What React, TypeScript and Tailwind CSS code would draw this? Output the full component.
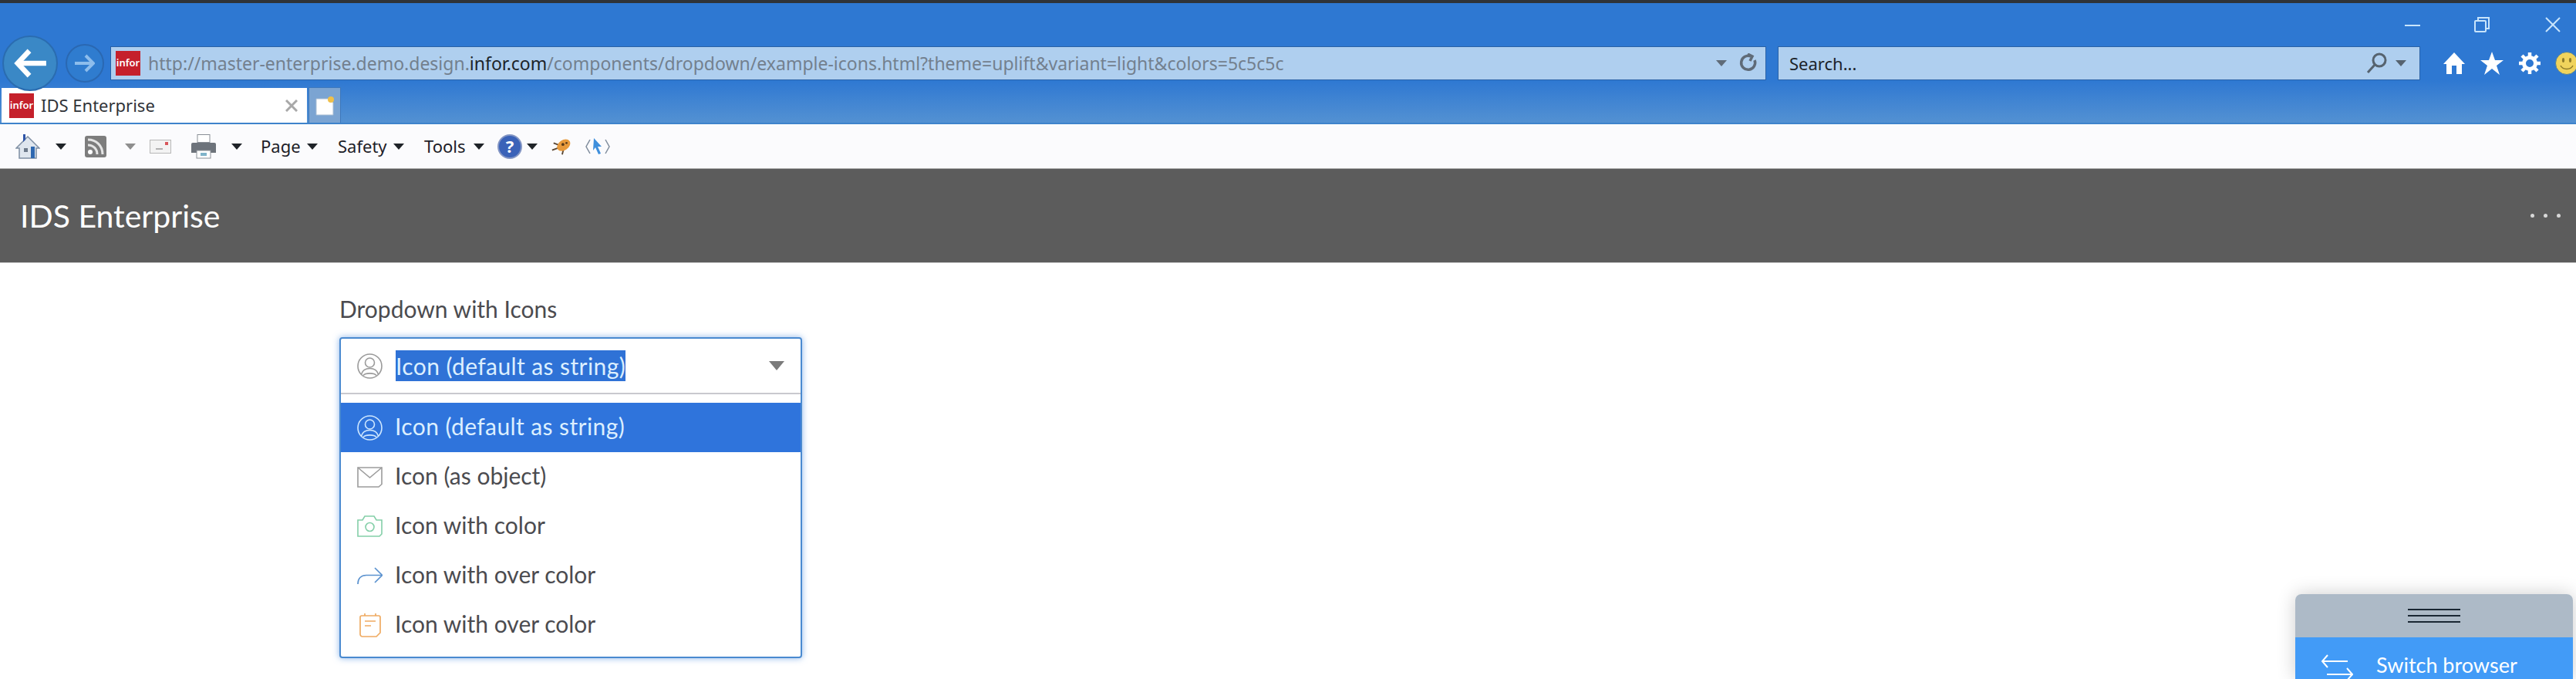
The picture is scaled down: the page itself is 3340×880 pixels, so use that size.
import type { ReactNode } from "react";

function Caret({ color = "#1f2328", className = "" }: { color?: string; className?: string }) {
  return (
    <svg viewBox="0 0 14 8" className={`h-[8px] w-[14px] shrink-0 ${className}`}>
      <polygon points="0,0 14,0 7,8" fill={color} />
    </svg>
  );
}

function InforLogo() {
  return (
    <div className="flex h-[32px] w-[32px] shrink-0 items-center justify-center overflow-hidden bg-[#c5202b] font-['Noto_Sans',sans-serif] text-[13px] font-semibold text-white">
      infor
    </div>
  );
}

function UserIcon({ color }: { color: string }) {
  return (
    <svg viewBox="0 0 33 33" className="h-[33px] w-[33px] shrink-0" fill="none" stroke={color} strokeWidth="1.6">
      <circle cx="16.5" cy="16.5" r="15.5" />
      <circle cx="16.5" cy="12" r="6" />
      <path d="M5.5 27c1.5-5 6-7.5 11-7.5s9.500 2.500 11 7.500" />
      <path d="M8 28.500c3-3.500 14-3.500 17 0" />
    </svg>
  );
}

function MailIcon() {
  return (
    <svg viewBox="0 0 33 27" className="h-[27px] w-[33px] shrink-0" fill="none" stroke="#9c9c9c" strokeWidth="1.6">
      <path d="M1 1h31v21.500l-4 3.500H1z" />
      <path d="M1 1l15.500 13L32 1" />
    </svg>
  );
}

function CameraIcon() {
  return (
    <svg viewBox="0 0 33 28" className="h-[28px] w-[33px] shrink-0" fill="none" stroke="#84cfa8" strokeWidth="1.6">
      <path d="M1 6h6l3-5h12l3 5h7v18l-3 3H1z" />
      <circle cx="16.500" cy="15" r="5.500" />
    </svg>
  );
}

function RedoIcon() {
  return (
    <svg viewBox="0 0 33 24" className="h-[24px] w-[33px] shrink-0" fill="none" stroke="#5b92cf" strokeWidth="1.7">
      <path d="M1 23c0-7 4-11.500 11-11.500h20" />
      <path d="M23 2l9.500 9.500L23 21" />
    </svg>
  );
}

function NoteIcon() {
  return (
    <svg viewBox="0 0 28 32" className="h-[32px] w-[28px] shrink-0" fill="none" stroke="#efab62" strokeWidth="1.7">
      <path d="M3 4h22a2 2 0 0 1 2 2v20l-5 5H4a3 3 0 0 1-3-3V6a2 2 0 0 1 2-2z" />
      <path d="M7 1v3M21 1v3M7 11h14M7 17h8" />
    </svg>
  );
}

function OptionRow({ icon, label, active }: { icon: ReactNode; label: string; active?: boolean }) {
  return (
    <div
      className={`flex h-[64px] items-center pl-[21px] ${active ? "bg-[#2f74dc] text-[#dcefff]" : "text-[#4b4b4f]"}`}
    >
      <div className="flex w-[33px] shrink-0 justify-center">{icon}</div>
      <span className={`ml-[16px] pb-[3px] ${active ? "tracking-[0.4px]" : ""}`}>{label}</span>
    </div>
  );
}

export default function App() {
  return (
    <div className="relative h-[880px] w-[3340px] overflow-hidden bg-white font-['Noto_Sans',sans-serif]">
      <div className="h-[4px] bg-[#2f3338]" />

      {/* window controls */}
      <div className="flex h-[56px] items-start justify-end bg-[#2e78d2] pr-[20px] pt-[18px]">
        <svg viewBox="0 0 20 20" className="mr-[70px] h-[20px] w-[20px]" fill="none" stroke="#c8e4fb" strokeWidth="2">
          <path d="M0 11h20" />
        </svg>
        <svg viewBox="0 0 20 20" className="mr-[72px] h-[20px] w-[20px]" fill="none" stroke="#c8e4fb" strokeWidth="2">
          <rect x="1" y="5" width="14" height="14" rx="1" />
          <path d="M5 5V1h14v14h-4" />
        </svg>
        <svg viewBox="0 0 20 20" className="h-[20px] w-[20px]" fill="none" stroke="#c8e4fb" strokeWidth="2">
          <path d="M1 1l18 18M19 1L1 19" />
        </svg>
      </div>

      {/* navigation row */}
      <div className="relative z-10 flex h-[44px] items-center bg-[#2e78d2] pl-[3px]">
        <div className="-my-[14px] flex h-[72px] w-[72px] shrink-0 items-center justify-center rounded-full border-2 border-[#2a6cb0] bg-[#3a88c6]">
          <svg viewBox="0 0 44 40" className="h-[38px] w-[42px]" fill="none" stroke="#ffffff" strokeWidth="7">
            <path d="M21 3L5 20l16 17" />
            <path d="M6 20h38" />
          </svg>
        </div>
        <div className="ml-[10px] flex h-[50px] w-[50px] shrink-0 items-center justify-center rounded-full border-2 border-[#2a68b2] bg-[#2f7ccf]">
          <svg viewBox="0 0 26 24" className="h-[24px] w-[26px]" fill="none" stroke="#8dbdec" strokeWidth="4">
            <path d="M14 2l10 10-10 10" />
            <path d="M0 12h23" />
          </svg>
        </div>
        <div className="ml-[8px] flex h-[44px] w-[2147px] shrink-0 items-center border border-[#2a62a6] bg-[#afcfef] pl-[6px]">
          <InforLogo />
          <div className="ml-[10px] whitespace-nowrap text-[23px] text-[#73808e]">
            http://master-enterprise.demo.design.<span className="text-[#1c2329]">infor.com</span>
            /components/dropdown/example-icons.html?theme=uplift&amp;variant=light&amp;colors=5c5c5c
          </div>
          <Caret color="#5f6b78" className="ml-auto" />
          <svg viewBox="0 0 24 26" className="ml-[16px] mr-[10px] h-[26px] w-[24px]" fill="none" stroke="#5f6b78" strokeWidth="3.500">
            <path d="M20 9a9 9 0 1 1-5-5" />
            <path d="M11 1l6 3-3 6" />
          </svg>
        </div>
        <div className="ml-[15px] flex h-[44px] w-[833px] shrink-0 items-center border border-[#2a62a6] bg-[#afcfef] pl-[14px] text-[22px] text-[#1c2329]">
          Search...
          <svg viewBox="0 0 27 28" className="ml-auto h-[28px] w-[27px]" fill="none" stroke="#56636f" strokeWidth="3">
            <circle cx="17" cy="10" r="8" />
            <path d="M11 16L2 26" />
          </svg>
          <Caret color="#56636f" className="ml-[11px] mr-[17px]" />
        </div>
        <div className="ml-[30px] flex shrink-0 items-center">
          <svg viewBox="0 0 28 28" className="h-[28px] w-[28px]" fill="#ffffff">
            <path d="M14 0L28 15h-4v13h-7V17h-6v11H4V15H0z" />
          </svg>
          <svg viewBox="0 0 30 30" className="ml-[20px] h-[30px] w-[30px]" fill="#ffffff">
            <polygon points="15,0 19,11 30,11 21,18 25,30 15,22 5,30 9,18 0,11 11,11" />
          </svg>
          <svg viewBox="0 0 28 28" className="ml-[20px] h-[28px] w-[28px]" fill="none" stroke="#ffffff">
            <circle cx="14" cy="14" r="7.500" strokeWidth="5" />
            <path
              d="M14 0v6M14 22v6M0 14h6M22 14h6M4 4l4 4M20 20l4 4M24 4l-4 4M8 20l-4 4"
              strokeWidth="4.500"
            />
          </svg>
          <svg viewBox="0 0 30 30" className="ml-[19px] h-[30px] w-[30px] shrink-0">
            <circle cx="15" cy="15" r="14.500" fill="#f0d35c" stroke="#4f7f99" strokeWidth="1" />
            <ellipse cx="10.500" cy="11" rx="1.600" ry="3" fill="#8f7c2a" />
            <ellipse cx="19.500" cy="11" rx="1.600" ry="3" fill="#8f7c2a" />
            <path d="M7 18c3 6 13 6 16 0" fill="none" stroke="#8f7c2a" strokeWidth="1.500" />
          </svg>
        </div>
      </div>

      {/* tab row */}
      <div className="flex h-[55px] items-end bg-gradient-to-b from-[#2e78d2] to-[#5391d2] pl-[2px]">
        <div className="flex h-[45px] w-[396px] items-center bg-white pl-[10px] pr-[12px] text-[22px] text-[#303338]">
          <InforLogo />
          <span className="ml-[9px]">IDS Enterprise</span>
          <svg viewBox="0 0 16 16" className="ml-auto h-[16px] w-[16px]" fill="none" stroke="#a8a8a8" strokeWidth="3">
            <path d="M1 1l14 14M15 1L1 15" />
          </svg>
        </div>
        <div className="ml-[2px] flex h-[46px] w-[42px] items-center justify-center border border-b-0 border-[#3d78bc] bg-[#7ba4d2]">
          <svg viewBox="0 0 24 26" className="h-[26px] w-[24px]">
            <path d="M1 4h17l5 5v16H1z" fill="#ffffff" stroke="#a9bdd2" />
            <circle cx="20" cy="5" r="4" fill="#f0c04a" />
          </svg>
        </div>
      </div>
      <div className="h-[2px] bg-[#3e83cb]" />

      {/* command bar */}
      <div className="flex h-[57px] items-center bg-[#fbfbfd] pl-[20px] text-[22px] text-[#1d2027]">
        <svg viewBox="0 0 32 32" className="h-[32px] w-[32px] shrink-0">
          <path d="M16 3L1 18h4v13h22V18h4z" fill="#dfe6ee" stroke="#7f8fa3" strokeWidth="1.500" />
          <path d="M10 0h3v7l-3 3z" fill="#2f55a8" />
          <rect x="11" y="18" width="5" height="5" fill="#6d7a8a" />
          <rect x="20" y="16" width="5" height="15" fill="#2f68b0" />
        </svg>
        <Caret className="ml-[20px]" />
        <svg viewBox="0 0 28 28" className="ml-[24px] h-[28px] w-[28px] shrink-0">
          <rect x="0" y="0" width="28" height="28" rx="3" fill="#7d7d7d" />
          <circle cx="7" cy="21" r="3" fill="#ffffff" />
          <path d="M4 12c7 0 12 5 12 12M4 5c11 0 19 8 19 19" fill="none" stroke="#e4e4e4" strokeWidth="3" />
        </svg>
        <Caret color="#8e8e8e" className="ml-[24px]" />
        <svg viewBox="0 0 28 18" className="ml-[18px] h-[18px] w-[28px] shrink-0">
          <rect x="0.500" y="0.500" width="27" height="17" fill="#f3f3f3" stroke="#b8b8b8" />
          <rect x="20" y="3" width="4" height="4" fill="#d8565a" />
          <path d="M8 12h9" stroke="#9a9a9a" strokeWidth="1.500" />
        </svg>
        <svg viewBox="0 0 32 32" className="ml-[26px] h-[32px] w-[32px] shrink-0">
          <rect x="8" y="0.500" width="16" height="10" fill="#ffffff" stroke="#8a8f96" />
          <path d="M2 11h28a2 2 0 0 1 2 2v11H0V13a2 2 0 0 1 2-2z" fill="#6d737b" />
          <rect x="7" y="21" width="18" height="10" fill="#ffffff" stroke="#8a8f96" />
          <rect x="12" y="24" width="8" height="4" fill="#7fb3c9" />
        </svg>
        <Caret className="ml-[20px]" />
        <span className="ml-[24px] w-[52px] whitespace-nowrap">Page</span>
        <Caret className="ml-[8px]" />
        <span className="ml-[26px] w-[65px] whitespace-nowrap">Safety</span>
        <Caret className="ml-[7px]" />
        <span className="ml-[26px] w-[56px] whitespace-nowrap">Tools</span>
        <Caret className="ml-[8px]" />
        <div className="ml-[17px] flex h-[32px] w-[32px] shrink-0 items-center justify-center rounded-full border-2 border-[#8496c4] bg-[#3a62b8] text-[22px] font-bold text-white">
          ?
        </div>
        <Caret className="ml-[6px]" />
        <svg viewBox="0 0 30 30" className="ml-[17px] h-[28px] w-[28px] shrink-0">
          <path d="M2 20l8-3M4 10l8 3M16 26l2-8" stroke="#5a4632" strokeWidth="2" />
          <ellipse cx="18" cy="13" rx="10" ry="7" fill="#e89a3c" transform="rotate(-35 18 13)" />
          <circle cx="17" cy="12" r="2" fill="#5a3a1a" />
          <circle cx="22" cy="10" r="1.500" fill="#5a3a1a" />
        </svg>
        <svg viewBox="0 0 32 26" className="ml-[17px] h-[26px] w-[32px] shrink-0" fill="none">
          <path d="M6 4L1 13l5 9M26 4l5 9-5 9" stroke="#7f8c9c" strokeWidth="1.500" />
          <path d="M11 2l10 11h-5l4 9-3 1-4-9-3 4z" fill="#3f8fdc" />
        </svg>
      </div>

      {/* app header */}
      <div className="flex h-[123px] items-center justify-between border-y border-t-[#a8a8a8] border-b-[#d0d0d0] bg-[#5c5c5c] pl-[26px] pr-[20px]">
        <span className="font-['Lato',sans-serif] text-[41px] text-white">IDS Enterprise</span>
        <div className="flex gap-[12px]">
          <div className="h-[5px] w-[5px] rounded-full bg-[#d8d8d8]" />
          <div className="h-[5px] w-[5px] rounded-full bg-[#d8d8d8]" />
          <div className="h-[5px] w-[5px] rounded-full bg-[#d8d8d8]" />
        </div>
      </div>

      {/* page body */}
      <div className="pl-[440px] pt-[39px] font-['Lato',sans-serif] text-[30px]">
        <div className="h-[40px] leading-[40px] text-[#4b4b4f]">Dropdown with Icons</div>
        <div className="mt-[17px] h-[416px] w-[600px] rounded-[4px] border-2 border-[#4a8ad0] bg-white shadow-[0_0_8px_rgba(60,130,220,0.6)]">
          <div className="flex h-[72px] items-center border-b-2 border-[#c9c9ce] pl-[21px] pr-[21px]">
            <UserIcon color="#9a9a9a" />
            <span className="ml-[17px] flex h-[40px] items-center bg-[#2f72d6] tracking-[0.4px] text-[#dcefff]">
              Icon (default as string)
            </span>
            <svg viewBox="0 0 20 12" className="ml-auto h-[12px] w-[20px]">
              <polygon points="0,0 20,0 10,12" fill="#7b7b7b" />
            </svg>
          </div>
          <div className="pt-[11px]">
            <OptionRow icon={<UserIcon color="#cfe8ff" />} label="Icon (default as string)" active />
            <OptionRow icon={<MailIcon />} label="Icon (as object)" />
            <OptionRow icon={<CameraIcon />} label="Icon with color" />
            <OptionRow icon={<RedoIcon />} label="Icon with over color" />
            <OptionRow icon={<NoteIcon />} label="Icon with over color" />
          </div>
        </div>
      </div>

      {/* floating browser switcher */}
      <div className="absolute bottom-0 right-[4px] w-[360px] overflow-hidden rounded-t-[8px] font-['Lato',sans-serif] shadow-[0_0_24px_rgba(0,0,0,0.2)]">
        <div className="flex h-[56px] flex-col items-center justify-center gap-[6px] bg-[#adbac7]">
          <div className="h-[2px] w-[68px] bg-[#1a2733]" />
          <div className="h-[2px] w-[68px] bg-[#1a2733]" />
          <div className="h-[2px] w-[68px] bg-[#1a2733]" />
        </div>
        <div className="flex h-[54px] items-start bg-[#429bf7] pl-[33px] pt-[22px] text-[27px] text-white">
          <svg viewBox="0 0 42 36" className="h-[36px] w-[42px] shrink-0" fill="none" stroke="#ffffff" strokeWidth="2">
            <path d="M9 1L2 9l7 8M2 9h33M8 26h33M34 18l7 8-7 8" />
          </svg>
          <span className="ml-[30px] whitespace-nowrap leading-[28px]">Switch browser</span>
        </div>
      </div>
    </div>
  );
}
